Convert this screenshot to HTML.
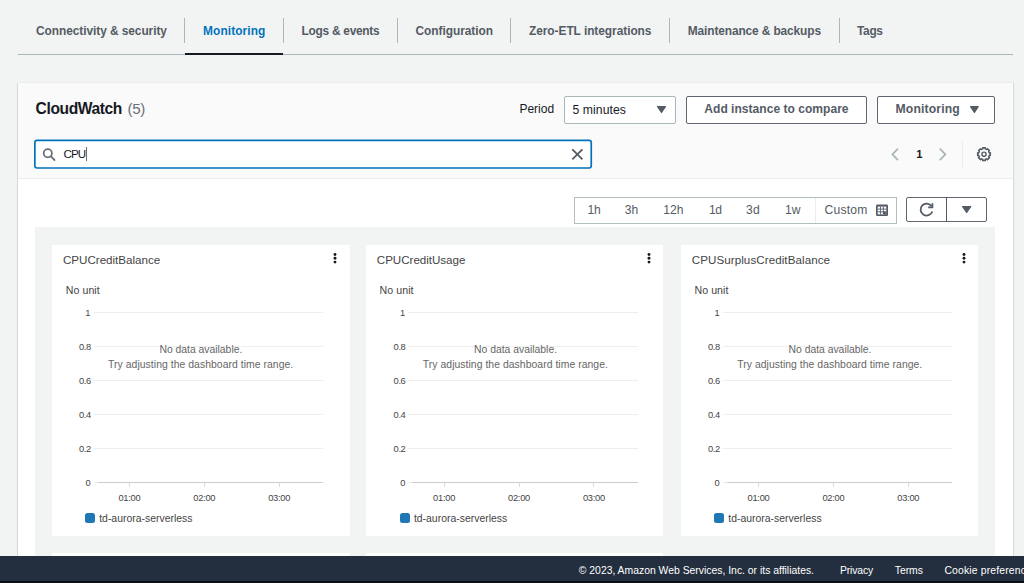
<!DOCTYPE html>
<html lang="en">
<head>
<meta charset="utf-8">
<title>RDS - CloudWatch Monitoring</title>
<style>
html,body{margin:0;padding:0}
body{width:1024px;height:583px;overflow:hidden;position:relative;background:#f2f3f3;font-family:"Liberation Sans", sans-serif;}
body>div,body>svg,body>span{position:absolute;display:block}
body>span{white-space:pre;line-height:20px}
</style>
</head>
<body>
<div style="left:183.80px;top:18.00px;width:1.00px;height:24.60px;background:#aab7b8"></div>
<div style="left:282.50px;top:18.00px;width:1.00px;height:24.60px;background:#aab7b8"></div>
<div style="left:396.50px;top:18.00px;width:1.00px;height:24.60px;background:#aab7b8"></div>
<div style="left:509.50px;top:18.00px;width:1.00px;height:24.60px;background:#aab7b8"></div>
<div style="left:668.80px;top:18.00px;width:1.00px;height:24.60px;background:#aab7b8"></div>
<div style="left:838.50px;top:18.00px;width:1.00px;height:24.60px;background:#aab7b8"></div>
<div style="left:18.00px;top:53.60px;width:994.50px;height:1.00px;background:#aab7b8"></div>
<div style="left:185.00px;top:52.50px;width:98.00px;height:2.00px;background:#16191f"></div>
<div style="left:17.50px;top:81.60px;width:995.00px;height:520.00px;background:#fff;box-shadow:0 1px 1px 0 rgba(0,28,36,.2),1px 1px 1px 0 rgba(0,28,36,.08),-1px 1px 1px 0 rgba(0,28,36,.08);border-top:1px solid #eaeded;box-sizing:border-box"></div>
<div style="left:17.50px;top:82.60px;width:995.00px;height:95.40px;background:#fafafa;border-bottom:1px solid #eaeded;box-sizing:content-box"></div>
<div style="left:564.10px;top:96.30px;width:111.90px;height:27.40px;background:#fff;border:1px solid #aab7b8;border-radius:2px;box-sizing:border-box"></div>
<svg style="left:656px;top:105.3px" width="11.0" height="9.0" viewBox="656 105.3 11.0 9.0"><path d="M657.6 106.89999999999999H665.4L661.5 112.8Z" fill="#545b64" stroke="#545b64" stroke-width="1.2" stroke-linejoin="round"/></svg>
<div style="left:686.20px;top:96.30px;width:180.70px;height:27.40px;background:#fff;border:1px solid #5f666f;border-radius:2px;box-sizing:border-box"></div>
<div style="left:877.30px;top:96.30px;width:117.70px;height:27.40px;background:#fff;border:1px solid #5f666f;border-radius:2px;box-sizing:border-box"></div>
<svg style="left:968.7px;top:105.3px" width="10.8" height="8.9" viewBox="968.7 105.3 10.8 8.9"><path d="M970.3000000000001 106.89999999999999H977.9L974.1 112.7Z" fill="#545b64" stroke="#545b64" stroke-width="1.2" stroke-linejoin="round"/></svg>
<svg style="left:32px;top:138px" width="562" height="33" viewBox="32 138 562 33"><rect x="34.85" y="140.3" width="556.4" height="27.7" rx="2.2" fill="#fff" stroke="#0073bb" stroke-width="1.7"/></svg>
<svg style="left:40px;top:146px" width="18" height="18" viewBox="40 146 18 18"><circle cx="47.8" cy="153.3" r="4.1" fill="none" stroke="#687078" stroke-width="1.8"/><path d="M50.9 156.4L54.5 160" stroke="#687078" stroke-width="1.8" stroke-linecap="round"/></svg>
<div style="left:86.00px;top:147.00px;width:1.00px;height:14.40px;background:#6a6f76"></div>
<svg style="left:569px;top:146px" width="17" height="17" viewBox="569 146 17 17"><path d="M572.3 149.3L582.4 159.4M582.4 149.3L572.3 159.4" stroke="#545b64" stroke-width="1.8" stroke-linecap="butt"/></svg>
<svg style="left:888px;top:145px" width="62" height="19" viewBox="888 145 62 19"><path d="M898 148.7L892.4 154.4L898 160.1" fill="none" stroke="#aab7b8" stroke-width="1.8" stroke-linejoin="round"/><path d="M939.8 148.7L945.4 154.4L939.8 160.1" fill="none" stroke="#aab7b8" stroke-width="1.8" stroke-linejoin="round"/></svg>
<div style="left:962.00px;top:140.60px;width:1.00px;height:27.00px;background:#eaeded"></div>
<svg style="left:975px;top:145px" width="18" height="18" viewBox="975 145 18 18"><path d="M990.34 152.78L990.34 155.62L989.32 155.40L988.61 157.11L989.49 157.68L987.48 159.69L986.91 158.81L985.20 159.52L985.42 160.54L982.58 160.54L982.80 159.52L981.09 158.81L980.52 159.69L978.51 157.68L979.39 157.11L978.68 155.40L977.66 155.62L977.66 152.78L978.68 153.00L979.39 151.29L978.51 150.72L980.52 148.71L981.09 149.59L982.80 148.88L982.58 147.86L985.42 147.86L985.20 148.88L986.91 149.59L987.48 148.71L989.49 150.72L988.61 151.29L989.32 153.00Z" fill="none" stroke="#545b64" stroke-width="1.5" stroke-linejoin="round"/><circle cx="984" cy="154.2" r="2.1" fill="none" stroke="#545b64" stroke-width="1.4"/></svg>
<div style="left:574.20px;top:197.30px;width:322.50px;height:26.30px;background:#fff;border:1px solid #b3bebf;box-sizing:border-box"></div>
<div style="left:814.60px;top:198.30px;width:1.00px;height:24.30px;background:#eaeded"></div>
<svg style="left:875px;top:204px" width="15" height="14" viewBox="875 204 15 14"><rect x="876" y="204.6" width="12" height="11.4" rx="1.2" fill="#545b64"/><rect x="877.7" y="206.6" width="8.6" height="7.8" fill="#fff"/><path d="M880.45 206.6v7.8M883.35 206.6v7.8M877.7 209.1h8.6M877.7 211.8h8.6" stroke="#545b64" stroke-width="0.9"/><rect x="883.35" y="211.8" width="3" height="2.7" fill="#545b64"/></svg>
<div style="left:906.10px;top:197.30px;width:80.50px;height:24.50px;background:#fff;border:1px solid #5f666f;border-radius:2px;box-sizing:border-box"></div>
<div style="left:945.60px;top:197.30px;width:1.00px;height:24.50px;background:#545b64"></div>
<svg style="left:917px;top:200px" width="20" height="20" viewBox="917 200 20 20"><path d="M931.6 206.2A6 6 0 1 0 932.3 211.5" fill="none" stroke="#545b64" stroke-width="1.8"/><path d="M932.4 203.2V207.4H928.2" fill="none" stroke="#545b64" stroke-width="1.8" stroke-linejoin="round"/></svg>
<svg style="left:960.5px;top:205.3px" width="11.3" height="8.9" viewBox="960.5 205.3 11.3 8.9"><path d="M962.1 206.9H970.1999999999999L966.15 212.7Z" fill="#545b64" stroke="#545b64" stroke-width="1.2" stroke-linejoin="round"/></svg>
<div style="left:35.30px;top:227.00px;width:959.90px;height:340.00px;background:#f2f3f3"></div>
<div style="left:51.70px;top:244.50px;width:297.90px;height:291.20px;background:#fff"></div>
<svg style="left:332.1px;top:251px" width="6" height="14" viewBox="0 0 6 14"><circle cx="3" cy="3.5" r="1.45" fill="#16191f"/><circle cx="3" cy="7.3" r="1.45" fill="#16191f"/><circle cx="3" cy="11.1" r="1.45" fill="#16191f"/></svg>
<div style="left:93.70px;top:312.00px;width:229.50px;height:1.00px;background:#eeeeee"></div>
<div style="left:93.70px;top:346.05px;width:229.50px;height:1.00px;background:#eeeeee"></div>
<div style="left:93.70px;top:380.10px;width:229.50px;height:1.00px;background:#eeeeee"></div>
<div style="left:93.70px;top:414.15px;width:229.50px;height:1.00px;background:#eeeeee"></div>
<div style="left:93.70px;top:448.20px;width:229.50px;height:1.00px;background:#eeeeee"></div>
<div style="left:93.70px;top:482.25px;width:4.00px;height:1.00px;background:#eeeeee"></div>
<div style="left:97.70px;top:482.25px;width:225.50px;height:1.00px;background:#cdcdcd"></div>
<div style="left:128.90px;top:483.40px;width:1.00px;height:3.60px;background:#dcdcdc"></div>
<div style="left:203.80px;top:483.40px;width:1.00px;height:3.60px;background:#dcdcdc"></div>
<div style="left:278.70px;top:483.40px;width:1.00px;height:3.60px;background:#dcdcdc"></div>
<div style="left:85.10px;top:513.00px;width:10.20px;height:10.20px;background:#1f77b4;border-radius:2.5px"></div>
<div style="left:366.40px;top:244.50px;width:296.80px;height:291.20px;background:#fff"></div>
<svg style="left:645.7px;top:251px" width="6" height="14" viewBox="0 0 6 14"><circle cx="3" cy="3.5" r="1.45" fill="#16191f"/><circle cx="3" cy="7.3" r="1.45" fill="#16191f"/><circle cx="3" cy="11.1" r="1.45" fill="#16191f"/></svg>
<div style="left:408.40px;top:312.00px;width:229.50px;height:1.00px;background:#eeeeee"></div>
<div style="left:408.40px;top:346.05px;width:229.50px;height:1.00px;background:#eeeeee"></div>
<div style="left:408.40px;top:380.10px;width:229.50px;height:1.00px;background:#eeeeee"></div>
<div style="left:408.40px;top:414.15px;width:229.50px;height:1.00px;background:#eeeeee"></div>
<div style="left:408.40px;top:448.20px;width:229.50px;height:1.00px;background:#eeeeee"></div>
<div style="left:408.40px;top:482.25px;width:4.00px;height:1.00px;background:#eeeeee"></div>
<div style="left:412.40px;top:482.25px;width:225.50px;height:1.00px;background:#cdcdcd"></div>
<div style="left:443.60px;top:483.40px;width:1.00px;height:3.60px;background:#dcdcdc"></div>
<div style="left:518.50px;top:483.40px;width:1.00px;height:3.60px;background:#dcdcdc"></div>
<div style="left:593.40px;top:483.40px;width:1.00px;height:3.60px;background:#dcdcdc"></div>
<div style="left:399.80px;top:513.00px;width:10.20px;height:10.20px;background:#1f77b4;border-radius:2.5px"></div>
<div style="left:680.80px;top:244.50px;width:297.20px;height:291.20px;background:#fff"></div>
<svg style="left:960.5px;top:251px" width="6" height="14" viewBox="0 0 6 14"><circle cx="3" cy="3.5" r="1.45" fill="#16191f"/><circle cx="3" cy="7.3" r="1.45" fill="#16191f"/><circle cx="3" cy="11.1" r="1.45" fill="#16191f"/></svg>
<div style="left:722.80px;top:312.00px;width:229.50px;height:1.00px;background:#eeeeee"></div>
<div style="left:722.80px;top:346.05px;width:229.50px;height:1.00px;background:#eeeeee"></div>
<div style="left:722.80px;top:380.10px;width:229.50px;height:1.00px;background:#eeeeee"></div>
<div style="left:722.80px;top:414.15px;width:229.50px;height:1.00px;background:#eeeeee"></div>
<div style="left:722.80px;top:448.20px;width:229.50px;height:1.00px;background:#eeeeee"></div>
<div style="left:722.80px;top:482.25px;width:4.00px;height:1.00px;background:#eeeeee"></div>
<div style="left:726.80px;top:482.25px;width:225.50px;height:1.00px;background:#cdcdcd"></div>
<div style="left:758.00px;top:483.40px;width:1.00px;height:3.60px;background:#dcdcdc"></div>
<div style="left:832.90px;top:483.40px;width:1.00px;height:3.60px;background:#dcdcdc"></div>
<div style="left:907.80px;top:483.40px;width:1.00px;height:3.60px;background:#dcdcdc"></div>
<div style="left:714.20px;top:513.00px;width:10.20px;height:10.20px;background:#1f77b4;border-radius:2.5px"></div>
<div style="left:51.70px;top:553.00px;width:297.90px;height:40.00px;background:#fff"></div>
<div style="left:366.40px;top:553.00px;width:296.80px;height:40.00px;background:#fff"></div>
<div style="left:0.00px;top:556.00px;width:1024.00px;height:27.00px;background:#232f3e"></div>
<div style="left:0.00px;top:581.20px;width:1024.00px;height:2.00px;background:#0b0d10"></div>
<span style="left:36.00px;top:21px;font-size:11.9px;font-weight:700;color:#545b64;letter-spacing:-0.055px">Connectivity &amp; security</span>
<span style="left:203.00px;top:21px;font-size:11.9px;font-weight:700;color:#0073bb;letter-spacing:0.104px">Monitoring</span>
<span style="left:301.50px;top:21px;font-size:11.9px;font-weight:700;color:#545b64;letter-spacing:-0.257px">Logs &amp; events</span>
<span style="left:415.50px;top:21px;font-size:11.9px;font-weight:700;color:#545b64;letter-spacing:-0.038px">Configuration</span>
<span style="left:529.00px;top:21px;font-size:11.9px;font-weight:700;color:#545b64;letter-spacing:-0.044px">Zero-ETL integrations</span>
<span style="left:687.80px;top:21px;font-size:11.9px;font-weight:700;color:#545b64;letter-spacing:-0.113px">Maintenance &amp; backups</span>
<span style="left:857.00px;top:21px;font-size:11.9px;font-weight:700;color:#545b64;letter-spacing:-0.298px">Tags</span>
<span style="left:35.60px;top:99px;font-size:15.6px;font-weight:700;color:#16191f;letter-spacing:-0.401px">CloudWatch</span>
<span style="left:127.50px;top:99px;font-size:15.2px;font-weight:400;color:#687078;letter-spacing:-0.359px">(5)</span>
<span style="left:519.40px;top:99px;font-size:12px;font-weight:400;color:#16191f;letter-spacing:0.002px">Period</span>
<span style="left:572.60px;top:100px;font-size:12.2px;font-weight:400;color:#16191f;letter-spacing:0.056px">5 minutes</span>
<span style="left:704.30px;top:99px;font-size:12.05px;font-weight:700;color:#545b64;letter-spacing:0.015px">Add instance to compare</span>
<span style="left:895.50px;top:99px;font-size:12.2px;font-weight:700;color:#545b64;letter-spacing:0.149px">Monitoring</span>
<span style="left:63.50px;top:144px;font-size:11.6px;font-weight:400;color:#16191f;letter-spacing:-0.914px">CPU</span>
<span style="left:916.30px;top:144px;font-size:11.2px;font-weight:700;color:#16191f;letter-spacing:-0.830px">1</span>
<span style="left:587.40px;top:200px;font-size:12.1px;font-weight:400;color:#545b64;letter-spacing:-0.130px">1h</span>
<span style="left:624.70px;top:200px;font-size:12.1px;font-weight:400;color:#545b64;letter-spacing:0.070px">3h</span>
<span style="left:663.20px;top:200px;font-size:12.1px;font-weight:400;color:#545b64;letter-spacing:0.070px">12h</span>
<span style="left:709.00px;top:200px;font-size:12.1px;font-weight:400;color:#545b64;letter-spacing:-0.380px">1d</span>
<span style="left:746.10px;top:200px;font-size:12.1px;font-weight:400;color:#545b64;letter-spacing:0.220px">3d</span>
<span style="left:785.00px;top:200px;font-size:12.1px;font-weight:400;color:#545b64;letter-spacing:0.016px">1w</span>
<span style="left:824.60px;top:200px;font-size:12.1px;font-weight:400;color:#545b64;letter-spacing:0.218px">Custom</span>
<span style="left:63.00px;top:250px;font-size:11.6px;font-weight:400;color:#444;letter-spacing:-0.010px">CPUCreditBalance</span>
<span style="left:65.80px;top:280px;font-size:10.6px;font-weight:400;color:#444;letter-spacing:0.059px">No unit</span>
<span style="left:85.30px;top:303px;font-size:9.3px;font-weight:400;color:#444;letter-spacing:0.027px">1</span>
<span style="left:78.90px;top:337px;font-size:9.3px;font-weight:400;color:#444;letter-spacing:-0.377px">0.8</span>
<span style="left:78.90px;top:371px;font-size:9.3px;font-weight:400;color:#444;letter-spacing:-0.377px">0.6</span>
<span style="left:78.90px;top:405px;font-size:9.3px;font-weight:400;color:#444;letter-spacing:-0.377px">0.4</span>
<span style="left:78.90px;top:439px;font-size:9.3px;font-weight:400;color:#444;letter-spacing:-0.377px">0.2</span>
<span style="left:85.50px;top:473px;font-size:9.3px;font-weight:400;color:#444;letter-spacing:0.027px">0</span>
<span style="left:118.40px;top:488px;font-size:9.3px;font-weight:400;color:#444;letter-spacing:-0.255px">01:00</span>
<span style="left:193.30px;top:488px;font-size:9.3px;font-weight:400;color:#444;letter-spacing:-0.255px">02:00</span>
<span style="left:268.20px;top:488px;font-size:9.3px;font-weight:400;color:#444;letter-spacing:-0.255px">03:00</span>
<span style="left:159.40px;top:340px;font-size:10.4px;font-weight:400;color:#666;letter-spacing:-0.014px">No data available.</span>
<span style="left:108.10px;top:355px;font-size:10.4px;font-weight:400;color:#666;letter-spacing:0.047px">Try adjusting the dashboard time range.</span>
<span style="left:99.20px;top:509px;font-size:10.4px;font-weight:400;color:#444;letter-spacing:0.017px">td-aurora-serverless</span>
<span style="left:376.80px;top:250px;font-size:11.6px;font-weight:400;color:#444;letter-spacing:-0.026px">CPUCreditUsage</span>
<span style="left:379.60px;top:280px;font-size:10.6px;font-weight:400;color:#444;letter-spacing:0.059px">No unit</span>
<span style="left:400.00px;top:303px;font-size:9.3px;font-weight:400;color:#444;letter-spacing:0.027px">1</span>
<span style="left:393.60px;top:337px;font-size:9.3px;font-weight:400;color:#444;letter-spacing:-0.377px">0.8</span>
<span style="left:393.60px;top:371px;font-size:9.3px;font-weight:400;color:#444;letter-spacing:-0.377px">0.6</span>
<span style="left:393.60px;top:405px;font-size:9.3px;font-weight:400;color:#444;letter-spacing:-0.377px">0.4</span>
<span style="left:393.60px;top:439px;font-size:9.3px;font-weight:400;color:#444;letter-spacing:-0.377px">0.2</span>
<span style="left:400.20px;top:473px;font-size:9.3px;font-weight:400;color:#444;letter-spacing:0.027px">0</span>
<span style="left:433.10px;top:488px;font-size:9.3px;font-weight:400;color:#444;letter-spacing:-0.255px">01:00</span>
<span style="left:508.00px;top:488px;font-size:9.3px;font-weight:400;color:#444;letter-spacing:-0.255px">02:00</span>
<span style="left:582.90px;top:488px;font-size:9.3px;font-weight:400;color:#444;letter-spacing:-0.255px">03:00</span>
<span style="left:474.10px;top:340px;font-size:10.4px;font-weight:400;color:#666;letter-spacing:-0.014px">No data available.</span>
<span style="left:422.80px;top:355px;font-size:10.4px;font-weight:400;color:#666;letter-spacing:0.047px">Try adjusting the dashboard time range.</span>
<span style="left:413.90px;top:509px;font-size:10.4px;font-weight:400;color:#444;letter-spacing:0.017px">td-aurora-serverless</span>
<span style="left:691.70px;top:250px;font-size:11.6px;font-weight:400;color:#444;letter-spacing:0.079px">CPUSurplusCreditBalance</span>
<span style="left:694.50px;top:280px;font-size:10.6px;font-weight:400;color:#444;letter-spacing:0.059px">No unit</span>
<span style="left:714.40px;top:303px;font-size:9.3px;font-weight:400;color:#444;letter-spacing:0.027px">1</span>
<span style="left:708.00px;top:337px;font-size:9.3px;font-weight:400;color:#444;letter-spacing:-0.377px">0.8</span>
<span style="left:708.00px;top:371px;font-size:9.3px;font-weight:400;color:#444;letter-spacing:-0.377px">0.6</span>
<span style="left:708.00px;top:405px;font-size:9.3px;font-weight:400;color:#444;letter-spacing:-0.377px">0.4</span>
<span style="left:708.00px;top:439px;font-size:9.3px;font-weight:400;color:#444;letter-spacing:-0.377px">0.2</span>
<span style="left:714.60px;top:473px;font-size:9.3px;font-weight:400;color:#444;letter-spacing:0.027px">0</span>
<span style="left:747.50px;top:488px;font-size:9.3px;font-weight:400;color:#444;letter-spacing:-0.255px">01:00</span>
<span style="left:822.40px;top:488px;font-size:9.3px;font-weight:400;color:#444;letter-spacing:-0.255px">02:00</span>
<span style="left:897.30px;top:488px;font-size:9.3px;font-weight:400;color:#444;letter-spacing:-0.255px">03:00</span>
<span style="left:788.50px;top:340px;font-size:10.4px;font-weight:400;color:#666;letter-spacing:-0.014px">No data available.</span>
<span style="left:737.20px;top:355px;font-size:10.4px;font-weight:400;color:#666;letter-spacing:0.047px">Try adjusting the dashboard time range.</span>
<span style="left:728.30px;top:509px;font-size:10.4px;font-weight:400;color:#444;letter-spacing:0.017px">td-aurora-serverless</span>
<span style="left:578.80px;top:561px;font-size:10.4px;font-weight:400;color:#fff;letter-spacing:-0.004px">© 2023, Amazon Web Services, Inc. or its affiliates.</span>
<span style="left:840.00px;top:561px;font-size:10.4px;font-weight:400;color:#fff;letter-spacing:-0.156px">Privacy</span>
<span style="left:894.80px;top:561px;font-size:10.4px;font-weight:400;color:#fff;letter-spacing:-0.062px">Terms</span>
<span style="left:944.40px;top:561px;font-size:10.4px;font-weight:400;color:#fff;letter-spacing:0.157px">Cookie preferences</span>
</body>
</html>
